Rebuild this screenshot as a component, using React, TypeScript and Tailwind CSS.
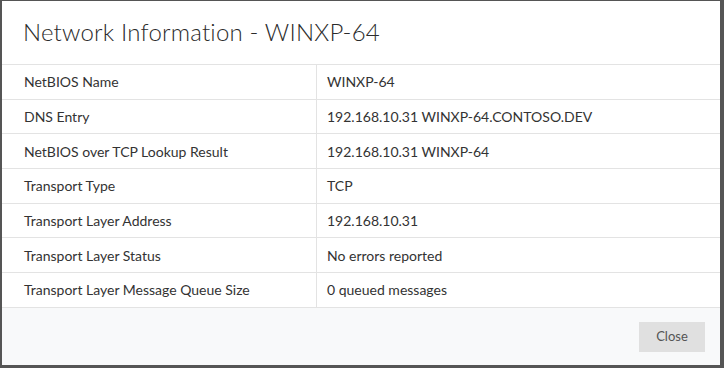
const ROWS = [
  ["NetBIOS Name", "WINXP-64"],
  ["DNS Entry", "192.168.10.31 WINXP-64.CONTOSO.DEV"],
  ["NetBIOS over TCP Lookup Result", "192.168.10.31 WINXP-64"],
  ["Transport Type", "TCP"],
  ["Transport Layer Address", "192.168.10.31"],
  ["Transport Layer Status", "No errors reported"],
  ["Transport Layer Message Queue Size", "0 queued messages"],
];

export default function App() {
  return (
    <div
      className="w-[724px] h-[368px] bg-[#555555] pl-[2px] pt-[1px] pr-[4px] pb-[3px]"
      style={{ fontFamily: "Lato, 'Open Sans', sans-serif" }}
    >
      <div className="flex flex-col h-full bg-white">
        {/* header */}
        <div className="h-[63px] flex items-center pl-[21px] pb-[1px]">
          <h1 className="text-[24px] leading-none text-[#2b2b2b] font-light tracking-[0.2px]">
            Network Information - WINXP-64
          </h1>
        </div>

        {/* table */}
        <div className="border-t border-[#e3e3e3]">
          {ROWS.map(([k, v]) => (
            <div key={k} className="flex h-[34.7px] border-b border-[#e3e3e3] text-[14px] text-[#333333]">
              <div className="w-[315px] flex items-center pl-[22px] border-r border-[#e3e3e3]">{k}</div>
              <div className="flex-1 flex items-center pl-[10px]">{v}</div>
            </div>
          ))}
        </div>

        {/* footer */}
        <div className="flex-1 bg-[#f8f9fa] flex items-start justify-end pt-[14px] pr-[15px]">
          <button className="w-[66px] h-[30px] bg-[#e0e0e0] text-[13px] text-[#555555]">
            Close
          </button>
        </div>
      </div>
    </div>
  );
}
